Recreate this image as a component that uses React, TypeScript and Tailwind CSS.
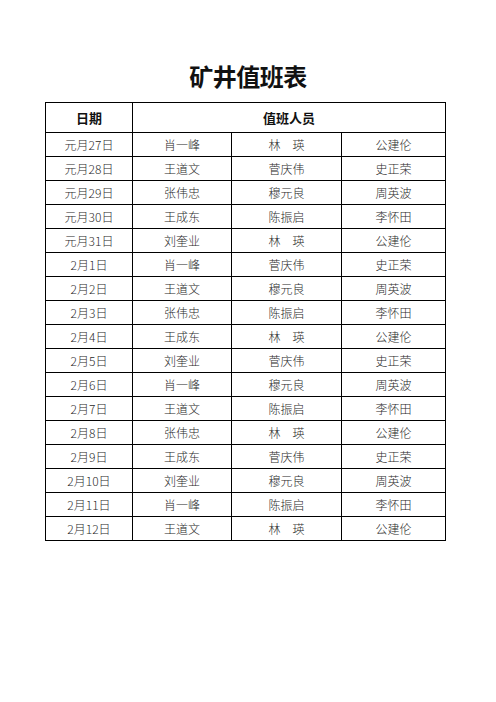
import React from 'react';

const rows: [string, string, string, string][] = [
  ['元月27日', '肖一峰', '林　瑛', '公建伦'],
  ['元月28日', '王道文', '菅庆伟', '史正荣'],
  ['元月29日', '张伟忠', '穆元良', '周英波'],
  ['元月30日', '王成东', '陈振启', '李怀田'],
  ['元月31日', '刘奎业', '林　瑛', '公建伦'],
  ['2月1日', '肖一峰', '菅庆伟', '史正荣'],
  ['2月2日', '王道文', '穆元良', '周英波'],
  ['2月3日', '张伟忠', '陈振启', '李怀田'],
  ['2月4日', '王成东', '林　瑛', '公建伦'],
  ['2月5日', '刘奎业', '菅庆伟', '史正荣'],
  ['2月6日', '肖一峰', '穆元良', '周英波'],
  ['2月7日', '王道文', '陈振启', '李怀田'],
  ['2月8日', '张伟忠', '林　瑛', '公建伦'],
  ['2月9日', '王成东', '菅庆伟', '史正荣'],
  ['2月10日', '刘奎业', '穆元良', '周英波'],
  ['2月11日', '肖一峰', '陈振启', '李怀田'],
  ['2月12日', '王道文', '林　瑛', '公建伦'],
];

const cell = 'border border-black h-[24px] p-0 text-center align-middle';

export default function App() {
  return (
    <div className="w-[496px] h-[702px] bg-white font-['Noto_Sans_CJK_SC',sans-serif] text-[#111]">
      <h1 className="pt-[64px] text-center text-[24px] leading-[24px] font-bold tracking-[-0.5px]">
        矿井值班表
      </h1>
      <table className="mt-[14px] ml-[45px] w-[400px] border-collapse table-fixed">
        <colgroup>
          <col className="w-[87px]" />
          <col className="w-[99px]" />
          <col className="w-[110px]" />
          <col className="w-[104px]" />
        </colgroup>
        <thead>
          <tr>
            <th className="border border-black h-[30px] p-0 text-center text-[13px] font-bold">日期</th>
            <th colSpan={3} className="border border-black h-[30px] p-0 text-center text-[13px] font-bold">
              值班人员
            </th>
          </tr>
        </thead>
        <tbody className="text-[12px] text-[#2a2a2a] font-light">
          {rows.map((r) => (
            <tr key={r[0]}>
              {r.map((c, i) => (
                <td key={i} className={cell}>
                  {c}
                </td>
              ))}
            </tr>
          ))}
        </tbody>
      </table>
    </div>
  );
}
